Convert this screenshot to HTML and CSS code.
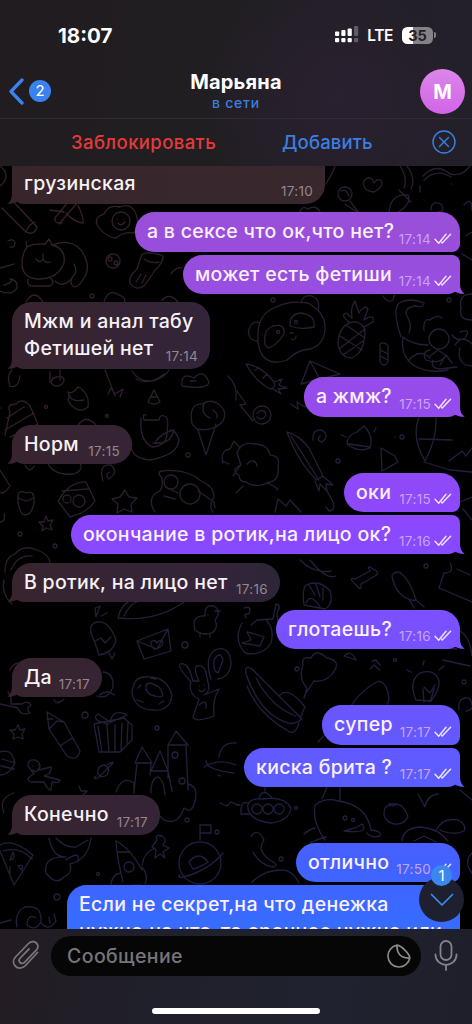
FILE: index.html
```html
<!DOCTYPE html>
<html lang="ru">
<head>
<meta charset="utf-8">
<title>Марьяна</title>
<link rel="stylesheet" href="styles.css">
</head>
<body>
<svg class="defs" width="0" height="0" aria-hidden="true">
  <symbol id="checks" viewBox="0 0 18 12"><path d="M1 6.3 4.7 10.2 12 1.2M8.2 9.9 16.6 1.2M8.2 9.9 7.6 9.3" fill="none" stroke="currentColor" stroke-width="1.4" stroke-linecap="round" stroke-linejoin="round"/></symbol>
  <symbol id="tail" viewBox="0 0 14 14"><path d="M2 0H9V4C9 8.500 10.500 11.500 13.700 13.700C9.500 14 6 13 3.500 11.200L0 8Z" fill="currentColor"/></symbol>
</svg>
<div class="phone">
  <header class="head">
    <div class="status">
      <span class="clock">18:07</span>
      <div class="indicators">
        <svg width="24" height="18" viewBox="0 0 24 18" fill="#fff"><rect x="0" y="5.500" width="4.200" height="4.500" rx="1"/><rect x="6.300" y="4" width="4.200" height="6" rx="1"/><rect x="12.600" y="2.500" width="4.200" height="7.500" rx="1"/><rect x="0" y="12" width="4.200" height="4.300" rx="1"/><rect x="6.300" y="12" width="4.200" height="4.300" rx="1"/><rect x="12.600" y="12" width="4.200" height="4.300" rx="1"/><g fill="#605c62"><rect x="19" y="0" width="4.200" height="10" rx="1"/><rect x="19" y="12" width="4.200" height="4.300" rx="1"/></g></svg>
        <span class="lte">LTE</span>
        <div class="battery"><span>35</span></div><i class="nub"></i>
      </div>
    </div>
    <div class="nav">
      <div class="back">
        <svg width="17" height="27" viewBox="0 0 17 27"><path d="M14 2 3 13.500 14 25" fill="none" stroke="#3b82ee" stroke-width="3.300" stroke-linecap="round" stroke-linejoin="round"/></svg>
        <span class="count">2</span>
      </div>
      <div class="who"><b class="name">Марьяна</b><span class="online">в сети</span></div>
      <div class="avatar">М</div>
    </div>
    <div class="actions">
      <span class="block">Заблокировать</span>
      <span class="add">Добавить</span>
      <svg class="close" width="24" height="24" viewBox="0 0 24 24" fill="none" stroke="#3b7fe0" stroke-width="1.400"><circle cx="12" cy="12" r="11"/><path d="M7.500 7.500 16.500 16.500M16.500 7.500 7.500 16.500" stroke-linecap="round"/></svg>
    </div>
  </header>

  <main class="chat">
    <svg class="doodles" viewBox="0 166 472 763" fill="none" stroke="url(#ink)" stroke-width="1.300" stroke-linecap="round" stroke-linejoin="round" aria-hidden="true">
      <defs><linearGradient id="ink" gradientUnits="userSpaceOnUse" x1="0" y1="200" x2="472" y2="620"><stop offset="0" stop-color="#352129"/><stop offset=".45" stop-color="#2a1d2f"/><stop offset="1" stop-color="#1f1f42"/></linearGradient></defs>
      <!-- pencils, egg, cats -->
      <path d="M0 166C8 172 8 180 0 186M2 208 26 232Q34 236 37 227L12 200M26 232Q28 225 35 222M55 218 68 202M59 224 78 202M55 218Q54 224 62 223M78 205Q84 218 83 223Q74 222 66 213"/>
      <path d="M97 225Q94 217 104 214Q108 204 120 207Q131 202 136 214Q140 224 134 233Q124 231 116 238Q106 238 97 225Z"/><circle cx="121" cy="221" r="9"/><path d="M117 219h.1M124 219h.1M118 223Q121 227 125 222"/>
      <path d="M27 247Q34 243 45 244L49 239 52 245Q66 248 64 263Q58 279 38 279Q22 278 22 263Q22 254 27 247L26 242M36 259Q40 264 43 259Q46 264 50 262M43 259V254M52 245Q70 238 81 250Q92 266 84 278Q76 291 72 285Q69 280 75 274Q77 270 74 264M28 279Q26 286 34 286H50Q56 282 50 278M55 281Q62 288 70 280"/>
      <path d="M8 241Q14 238 15 243Q15 248 10 247M0 268 14 264M0 291Q12 296 17 288Q18 280 10 279M4 285Q10 284 12 280"/>
      <circle cx="113" cy="261" r="7"/><circle cx="110" cy="259" r="2"/><circle cx="116" cy="263" r="2"/>
      <path d="M142 254Q150 251 163 256Q163 263 156 269L145 285Q136 292 130 283Q129 276 137 269ZM141 274 136 282M146 275 142 283M144 259Q151 264 159 262"/>
      <path d="M104 302Q108 288 119 295Q128 298 123 304M26 302Q34 288 43 302M171 274Q176 266 182 268M162 300Q170 292 178 302"/>
      <!-- sky bits beside the first rows -->
      <path d="M365 188C359 178 373 174 374 183C380 174 388 185 374 192Q366 191 365 188ZM326 184Q334 170 335 166M400 166Q408 178 404 188M407 166Q416 178 411 189M423 176Q436 162 450 174Q462 177 470 166M424 180Q436 168 451 177"/><circle cx="345" cy="194" r="7"/><path d="M350 201 359 213M341 191Q346 188 349 196M389 212Q391 193 408 195Q412 204 397 213M399 190 411 202M420 186v6M424 200h.1M451 184h.1"/><path d="M431 210Q431 200 441 204Q446 212 438 212M464 205Q472 196 472 210M466 236Q476 226 476 244M462 254 472 260"/>
      <path d="M300 212Q302 205 308 209Q316 204 320 212M345 204 360 214M50 210 64 212M440 242Q455 238 460 246"/>
      <!-- panda, carrot, pineapple -->
      <path d="M258 333Q259 313 276 307Q290 300 308 303Q326 313 325 329Q324 345 310 349Q297 350 287 360Q271 366 263 356Q257 348 258 333ZM257 341Q247 340 249 329Q252 320 260 323M301 303Q303 294 312 296Q321 300 318 310M265 345Q263 329 273 326Q285 323 284 334Q276 346 268 348ZM290 326Q289 314 301 313Q316 315 314 327Q300 330 290 326ZM290 333h3M291 339Q296 341 296 336"/><circle cx="278" cy="332" r="1.500"/><circle cx="296" cy="322" r="1.500"/>
      <path d="M246 364Q262 366 274 382Q276 388 270 389Q254 380 246 364ZM274 382 282 379 279 385 287 388 278 389 281 394 273 389M255 370 259 368M263 378 267 374"/>
      <path d="M338 342Q340 325 352 322Q364 321 365 333Q364 354 351 358Q339 357 338 342ZM340 336 362 350M346 325 365 338M339 349 365 329M343 355 363 341M349 322Q340 315 346 313L352 318Q350 308 355 301L359 313Q365 304 368 309L364 320Q375 313 373 322L364 327"/>
      <path d="M301 384 310 361 340 374ZM310 361Q315 370 320 380M380 344Q385 341 388 346V362Q384 368 380 362ZM380 350 388 354M380 356 388 360M383 296Q388 304 393 300L396 290"/>
      <path d="M401 337Q392 310 399 303Q410 297 424 303Q424 308 415 306Q402 308 408 318Q412 325 409 333M403 337Q400 355 413 365Q428 374 448 370M403 337Q413 345 428 345M424 330Q423 318 430 320Q437 314 442 318M409 360Q420 348 430 358M430 350Q421 352 426 360Q438 364 444 358M433 360Q430 368 440 369L457 367M460 332Q472 328 465 338Q458 342 452 335M455 345Q462 334 472 344M460 348Q456 365 472 366"/><circle cx="439" cy="339" r="10"/><path d="M430 356 438 350 448 357M440 365 446 355 452 363M472 294Q458 294 461 308Q458 320 472 320"/>
      <!-- left column beneath the long reply -->
      <path d="M12 370Q6 376 10 386Q18 389 20 376M50 372V383M60 370V380M57 377C65 374 67 384 58 386C49 386 50 378 57 377M105 370 115 396M108 394 111 388 115 394 123 389 120 397M132 371Q140 384 156 380Q166 376 169 370M136 379Q150 386 164 374M182 386Q181 371 194 378Q203 368 209 382Q208 390 182 386ZM190 381h6M84 400Q70 403 68 392Q72 395 78 387Q90 393 88 407Q80 414 71 405Q66 400 70 396M148 402 154 390 160 402Q153 406 148 402M150 397h8M228 376Q238 385 236 400"/>
      <path d="M5 435 10 412Q6 404 16 404Q22 397 30 406L38 424M7 418 24 407M5 430 34 413M10 437 38 424M78 425Q86 414 96 425M1 408h.1"/>
      <path d="M141 418Q139 440 152 447Q168 446 167 431Q169 421 166 417Q160 413 159 420H144Q142 413 146 415M155 443Q160 433 174 430Q171 445 153 443M131 442Q129 458 150 460Q178 455 179 440Q176 430 170 430"/>
      <path d="M192 424Q188 403 203 404Q208 399 217 403Q228 410 223 421Q214 432 197 429ZM198 430 206 455 216 424M204 404Q200 413 210 418M213 410l4 4v4"/>
      <path d="M47 461Q52 476 74 474Q84 470 80 463M25 465Q30 474 34 466M103 481Q98 464 111 465Q119 472 109 479Q104 474 110 472M0 470 10 486Q4 495 0 492M58 501Q70 481 86 482L95 501Q88 512 70 517ZM62 491 88 489M18 497Q18 489 26 493Q35 489 34 503Q31 518 22 514Q17 505 18 497ZM18 498 26 501 34 498M0 522Q6 522 4 514"/><circle cx="67" cy="499" r="4"/><circle cx="79" cy="501" r="6"/>
      <path d="m125 490 4 7 8 1-6 6 1 8-8-3-7 4 1-9-6-5 8-2zM46 516l2 5 5-1-3 5 2 5-6-2-4 3 1-5-4-4h5z"/>
      <path d="M155 512Q147 500 156 493Q164 491 162 478Q156 472 162 471Q186 468 201 481Q214 486 214 497Q208 506 213 512M164 496 175 499M178 493 165 487M198 491 214 502 215 508"/><circle cx="171" cy="482" r="7"/><circle cx="190" cy="494" r="10"/>
      <path d="M223 463Q220 450 230 449L234 441 240 448M222 461 229 464M233 476 240 466"/>
      <!-- curls, umbrella, sheep, bell -->
      <circle cx="262" cy="415" r="9"/><path d="M257 413Q264 407 266 415Q262 422 257 417M237 391 246 404 240 405 253 421M291 404 298 409 297 402 305 407 311 405M313 440Q312 429 322 430Q330 436 322 442Q316 440 320 436M287 432Q299 435 309 448L323 476 317 480Q299 464 287 432ZM291 436 319 480M323 476 333 485 326 484 327 491 320 484 319 491 315 481M326 489 333 502Q336 510 329 511L326 507"/>
      <path d="M237 453Q241 441 254 444Q268 444 270 455Q281 456 278 466Q280 480 270 482Q255 489 246 482Q239 482 239 475Q230 470 241 465ZM247 464Q255 457 257 466M243 486 236 493M267 482 278 489M347 444Q347 435 357 432L364 426Q374 436 370 448Q358 453 347 444ZM349 444 370 447M346 437 341 435M374 432 376 428M381 448 382 471 398 462 395 456ZM419 417Q411 438 425 461Q437 439 436 418M419 439 452 440M424 462 450 470 472 472M449 461 462 451 466 456 472 448"/>
      <path d="M275 512 278 499 286 506 290 500 301 512M460 502 472 497M463 509 472 520M277 490h.1M395 437h.1"/>
      <!-- dinosaur, lolly, letter, donut -->
      <path d="M5 572Q5 557 15 554Q23 544 37 550Q49 554 50 563M11 570Q17 555 32 556M4 580Q1 594 12 604 14 619Q17 631 8 641M20 600Q24 615 18 633Q2 646 5 652Q20 655 34 641M38 602Q36 616 51 631Q61 640 63 622Q59 608 49 602M24 642Q43 638 51 652M44 623Q36 643 35 649Q43 655 51 652M63 625 73 623Q80 629 75 632Q62 636 54 636"/>
      <path d="M94 640Q86 625 97 622Q109 620 116 640Q113 653 99 655ZM95 641 101 638 105 643 111 637M108 651 112 659 115 653M96 617 95 608 100 606ZM101 616 107 613M118 618Q122 600 138 599M118 618Q156 622 184 602M124 616Q132 600 143 601"/>
      <path d="M137 641 168 629 171 651 144 659ZM137 641 157 649 168 629M154 649C146 639 156 639 157 643C163 635 167 648 154 649Z"/>
      <path d="M132 693Q133 677 145 677Q166 675 172 695Q170 712 152 710Q135 709 132 693ZM146 686Q147 680 159 687Q168 700 155 696Q145 694 146 686ZM138 688l3-3M137 700l6 2M159 704l5-3M151 678l5 1"/>
      <path d="M195 630Q191 615 205 616Q204 604 214 606Q222 611 215 620Q219 628 212 633Q202 636 195 630ZM208 615h.1M215 611 220 611M200 632v5M210 633v4"/><path d="M191 682Q177 667 180 664Q188 661 193 681M193 681H199M199 681Q193 668 197 666Q204 664 206 673L208 682Q211 692 204 695L219 689Q212 700 214 716Q196 723 193 717L199 699Q188 694 191 682M199 686h.1M204 685h.1M199 690Q202 694 205 689M199 705Q207 698 206 708M211 679Q204 658 215 650Q229 644 231 663Q230 677 218 679M214 660Q220 650 223 660L218 673Q213 672 214 660Z"/>
      <path d="M8 692Q12 697 11 704H22Q28 700 31 705Q25 709 30 713Q20 716 18 708L0 704M99 695Q108 689 114 695M103 672Q114 673 113 687Q108 700 97 696M54 700Q57 706 64 699M10 670Q13 664 18 663"/>
      <!-- fish bowl, ship, moon, bone -->
      <path d="M242 623Q233 640 245 653Q262 657 271 643Q275 629 266 620M247 632 251 640 242 643 260 646 264 637 255 634ZM244 608Q252 605 249 614Q243 613 246 618M251 625 257 620 273 619 276 604Q282 605 277 613L278 622M304 605Q302 590 306 585Q320 579 330 591Q334 604 325 609ZM309 585 315 595M316 584 320 597M323 588 323 600M306 603Q311 592 320 607M356 585Q347 577 355 579L370 571Q366 564 373 569Q381 572 375 576L361 584Q362 592 356 585M300 560Q314 574 331 571M310 560Q326 580 336 576M393 574Q390 575 397 590Q407 602 416 600Q411 582 402 574Q398 570 393 574ZM409 599 414 608M416 600 424 607M444 573 439 588 472 602M450 563Q455 573 444 573M457 569 470 575"/>
      <path d="M246 674Q244 664 252 669L302 719Q294 725 288 723Q260 714 246 674ZM256 678Q272 708 296 716M247 686Q257 713 288 731Q295 736 299 723M279 696Q288 685 305 707L300 718M304 698 307 688Q298 678 303 665Q301 656 311 658Q316 648 327 658Q340 660 335 670Q327 683 314 681L306 693M347 712Q360 690 379 681Q388 684 389 699L386 710M344 656Q351 649 356 660ZM372 661 376 660 380 665M370 669l4-4 6 5"/>
      <path d="M416 700Q408 681 420 673Q435 668 439 681Q440 689 431 701ZM423 689 424 702M434 689 430 702M424 687 430 693 435 685M411 672 407 670M423 665 424 661M439 670 444 666M459 710Q457 697 469 698Q477 710 466 711M456 629Q470 634 472 656M438 647 457 649M318 742Q334 725 341 722M443 660 470 666"/>
      <!-- gift, crayon, castle and planets -->
      <path d="M94 724 124 718 132 725 132 740 120 752 99 752ZM98 726 102 752M107 725 109 752M115 725 115 752M122 723 121 750M128 723 127 743M108 724Q90 720 98 714L110 722Q113 708 127 715L109 723M47 712 49 729 67 756Q77 762 80 751L64 722ZM49 729 57 721 64 722M60 746 72 738M47 719 53 719M18 725l2 5 5-1-3 5 1 5-5-2-5 2 1-5-4-4h5zM0 752Q10 749 13 757L15 763Q9 775 0 775M2 759 15 763M1 766 14 769"/>
      <path d="M142 747 135 763H152ZM137 763 134 791M151 763 150 775M160 751 151 771H168ZM168 771 172 791M176 731 168 745H188ZM168 745V778M186 745 188 790M151 793Q151 778 158 777Q164 780 165 795M116 792Q122 775 134 783V793M188 784Q200 787 194 804Q191 814 184 808Q178 826 164 820L160 816"/><circle cx="175" cy="755" r="3"/><circle cx="182" cy="781" r="3"/>
      <path d="M28 766Q28 759 35 760Q42 762 39 770L51 767Q52 774 44 776L60 780Q60 784 52 782L51 790Q47 789 44 782L31 782Q24 779 34 774ZM33 766h.1M38 765h.1M33 770Q36 774 39 768M98 773Q97 765 105 765Q111 769 107 775Q100 779 98 773ZM96 776Q92 780 98 778L112 764Q115 760 107 765M79 786l2 5 6 0-4 4 1 5M204 767Q218 758 236 765M206 761Q207 770 234 773M219 757Q221 742 236 743M221 776 218 775M220 803 227 806 231 802 238 805"/>
      <path d="M4 813Q-2 798 14 793M0 845Q13 838 33 855L14 885 0 851M3 851Q20 846 32 859M13 852Q16 859 10 860ZM18 866Q24 863 22 870ZM10 867v6M49 838Q53 858 66 857Q43 856 46 873Q56 886 64 877Q73 873 70 864Q88 860 91 838M56 838Q65 848 76 847L88 840M66 860Q80 850 78 861"/>
      <path d="M116 841Q117 858 123 882M116 841Q130 848 142 870M117 852H129M111 887Q111 874 121 873M142 867Q149 875 145 884M124 886 140 885M142 865Q144 852 155 848"/><circle cx="129" cy="867" r="5"/><path d="M157 840Q154 834 162 836Q168 839 163 845L169 848 163 852 165 858 160 854 155 858 156 850 152 847Z"/><circle cx="200" cy="863" r="21"/><path d="M200 840V825H211V833H201M189 862Q199 850 208 862Q199 868 193 869ZM180 875Q176 878 184 877Q209 870 223 853M17 927Q14 912 25 907Q42 904 41 922Q35 932 27 925Q28 913 36 918M0 923 11 920M41 923Q49 932 56 921L54 914M49 917 50 923"/>
      <!-- submarine and sea life -->
      <path d="M248 809Q246 798 262 799Q285 796 291 808Q289 821 271 823Q251 821 248 809ZM248 803Q240 800 241 814H250M259 798Q263 787 272 798M265 791V788M236 805h4"/><circle cx="257" cy="809" r="5"/><circle cx="268" cy="809" r="5"/><circle cx="279" cy="809" r="5"/>
      <path d="M315 805Q312 822 325 840M315 805Q326 797 338 801Q367 805 371 830Q382 831 380 836Q370 838 367 833M344 831Q357 828 362 824Q370 834 344 831ZM322 799 327 787M340 801V786M304 834Q310 829 315 828M310 843Q323 837 326 837M384 815Q384 803 393 806Q401 800 408 816Q405 825 394 824Q386 822 384 815ZM389 804H397M418 794 425 807Q427 795 438 794M402 841Q403 828 420 827Q438 828 448 841M436 831Q442 817 458 820Q467 825 464 831Q454 836 440 830M414 841 424 836 436 842M251 836Q258 827 264 840Q256 850 270 860Q280 865 273 867Q260 865 253 852M252 882Q265 870 280 870Q292 869 299 883M472 853Q463 862 472 873M460 790 472 800"/><circle cx="345" cy="818" r="2"/><circle cx="353" cy="820" r="1.500"/>
      <g fill="none"><circle cx="273" cy="300" r="2"/><circle cx="449" cy="300" r="2"/><circle cx="46" cy="407" r="1.500"/><circle cx="107" cy="416" r="1.500"/><circle cx="338" cy="461" r="2"/><circle cx="20" cy="534" r="2"/><circle cx="55" cy="546" r="2"/><circle cx="188" cy="455" r="2"/><circle cx="402" cy="437" r="2"/><circle cx="85" cy="715" r="3"/><circle cx="185" cy="645" r="3"/><circle cx="157" cy="728" r="2"/><circle cx="297" cy="669" r="2"/><circle cx="395" cy="660" r="1.500"/><circle cx="464" cy="682" r="2"/><circle cx="57" cy="897" r="3"/><circle cx="98" cy="874" r="1.500"/><circle cx="187" cy="820" r="2"/><circle cx="217" cy="832" r="2"/><circle cx="296" cy="808" r="1.500"/><circle cx="281" cy="859" r="2"/><circle cx="92" cy="296" r="2"/><circle cx="426" cy="566" r="2"/></g>
    </svg>

    <div class="thread">
      <div class="msg in tall first"><p class="t"><br>грузинская</p><span class="meta">17:10</span><svg class="tail"><use href="#tail"/></svg></div>
      <div class="msg out top w325"><p class="t">а в сексе что ок,что нет?</p><span class="meta">17:14<svg class="ck"><use href="#checks"/></svg></span></div>
      <div class="msg out end w277"><p class="t">может есть фетиши</p><span class="meta">17:14<svg class="ck"><use href="#checks"/></svg></span><svg class="tail c1"><use href="#tail"/></svg></div>
      <div class="msg in tall w198"><p class="t">Мжм и анал табу<br>Фетишей нет</p><span class="meta">17:14</span><svg class="tail"><use href="#tail"/></svg></div>
      <div class="msg out w156"><p class="t">а жмж?</p><span class="meta">17:15<svg class="ck"><use href="#checks"/></svg></span><svg class="tail c2"><use href="#tail"/></svg></div>
      <div class="msg in w120"><p class="t">Норм</p><span class="meta">17:15</span><svg class="tail"><use href="#tail"/></svg></div>
      <div class="msg out top w116"><p class="t">оки</p><span class="meta">17:15<svg class="ck"><use href="#checks"/></svg></span></div>
      <div class="msg out end w389"><p class="t">окончание в ротик,на лицо ок?</p><span class="meta">17:16<svg class="ck"><use href="#checks"/></svg></span><svg class="tail c3"><use href="#tail"/></svg></div>
      <div class="msg in w268"><p class="t">В ротик, на лицо нет</p><span class="meta">17:16</span><svg class="tail"><use href="#tail"/></svg></div>
      <div class="msg out w184"><p class="t">глотаешь?</p><span class="meta">17:16<svg class="ck"><use href="#checks"/></svg></span><svg class="tail c4"><use href="#tail"/></svg></div>
      <div class="msg in w90"><p class="t">Да</p><span class="meta">17:17</span><svg class="tail"><use href="#tail"/></svg></div>
      <div class="msg out top w138"><p class="t">супер</p><span class="meta">17:17<svg class="ck"><use href="#checks"/></svg></span></div>
      <div class="msg out end w216"><p class="t">киска брита ?</p><span class="meta">17:17<svg class="ck"><use href="#checks"/></svg></span><svg class="tail c5"><use href="#tail"/></svg></div>
      <div class="msg in w148"><p class="t">Конечно</p><span class="meta">17:17</span><svg class="tail"><use href="#tail"/></svg></div>
      <div class="msg out top w164"><p class="t">отлично</p><span class="meta">17:50<svg class="ck"><use href="#checks"/></svg></span></div>
      <div class="msg out end tall w393"><p class="t">Если не секрет,на что денежка<br>нужно,на что-то срочное нужно или</p></div>
    </div>
    <div class="jump">
      <span class="unread">1</span>
      <svg width="24" height="14" viewBox="0 0 24 14"><path d="M1.500 1.500 12 12 22.500 1.500" fill="none" stroke="#3b8bee" stroke-width="1.700" stroke-linecap="round" stroke-linejoin="round"/></svg>
    </div>
  </main>

  <footer class="foot">
    <div class="compose">
      <svg width="28" height="30" viewBox="0 0 28 30"><path d="M25.500 12.500 13.500 25.500C10 29.200 5.500 28.700 3.300 26.200C.8 23.500 1 19.800 3.500 17L16.500 3.500C19 .9 22.300 1 24.300 3C26.300 5 26.300 8 24 10.500L12.500 22.300C11 23.800 9.200 23.700 8 22.500C6.800 21.300 6.900 19.500 8.300 18L17 9" fill="none" stroke="#77747b" stroke-width="1.800" stroke-linecap="round"/></svg>
      <div class="field"><span>Сообщение</span>
        <svg width="24" height="24" viewBox="0 0 24 24" fill="none" stroke="#8a888c" stroke-width="1.700" stroke-linejoin="round"><path d="M10 1.200A11 11 0 1 0 22.800 14C22.500 10 15 2 10 1.200ZM10 1.200C9.500 9 13.500 14.500 22.800 14"/></svg>
      </div>
      <svg width="24" height="31" viewBox="0 0 24 31" fill="none" stroke="#85838a" stroke-width="1.800" stroke-linecap="round"><rect x="6.500" y="1" width="11" height="19" rx="5.500"/><path d="M1.500 14.500V15A10.500 9.800 0 0 0 22.500 15V14.500M12 25V30"/></svg>
    </div>
    <div class="home"></div>
  </footer>
</div>
</body>
</html>
```
FILE: styles.css
```css
* { box-sizing: border-box; }
body { margin: 0; background: #000; font-family: Inter, "Liberation Sans", sans-serif; color: #fff; }
.defs { position: absolute; }
.phone { width: 472px; height: 1024px; display: flex; flex-direction: column; overflow: hidden; }

.head { height: 166px; background: radial-gradient(circle at 72% 60%, #2a2030 0, transparent 38%), linear-gradient(100deg, #201c1f 0, #211e22 45%, #23202a 100%); }
.status { height: 64px; padding: 24px 36px 0 58px; display: flex; justify-content: space-between; align-items: flex-start; }
.clock { font-size: 20.500px; font-weight: 700; line-height: 24px; }
.indicators { display: flex; align-items: center; height: 22px; }
.lte { font-size: 15.500px; font-weight: 600; letter-spacing: -.4px; margin-left: 8px; }
.battery { width: 31px; height: 17px; margin-left: 9px; border-radius: 5.500px; background: linear-gradient(90deg, #fff 37%, #858287 37%); color: #242126; font-size: 14.500px; font-weight: 700; line-height: 17px; text-align: center; }
.nub { width: 2px; height: 6px; margin-left: 1px; border-radius: 0 2px 2px 0; background: #858287; }

.nav { height: 55px; padding: 0 8px; display: grid; grid-template-columns: 60px 1fr 60px; align-items: center; border-bottom: 1px solid #302c33; }
.back { display: flex; align-items: center; gap: 4px; }
.count { width: 22px; height: 22px; border-radius: 50%; background: #3b82f0; font-size: 15px; line-height: 22px; text-align: center; }
.who { display: flex; flex-direction: column; align-items: center; }
.name { font-size: 20px; font-weight: 650; line-height: 24px; letter-spacing: .2px; }
.online { font-size: 14px; font-weight: 500; line-height: 18px; letter-spacing: .8px; color: #3b7fe0; }
.avatar { justify-self: end; width: 45px; height: 45px; margin-right: -1px; border-radius: 50%; background: linear-gradient(#dc86ea, #d264e8); font-size: 20px; font-weight: 700; line-height: 46px; text-align: center; }
.actions { height: 47px; padding: 0 16px 2px 71px; display: flex; align-items: center; font-size: 18.500px; font-weight: 500; }
.block { color: #e33b3b; width: 211px; letter-spacing: .4px; }
.add { color: #3b7fe0; letter-spacing: .15px; }
.close { margin-left: auto; }

.chat { height: 763px; position: relative; overflow: hidden; background: #000; }
.doodles { position: absolute; inset: 0; width: 472px; height: 763px; }
.thread { position: relative; display: flex; flex-direction: column; padding: 0 12px; margin-top: -29px; }
.msg { position: relative; flex: none; height: 39.300px; margin-bottom: 8.300px; padding: 6px 12px 0; border-radius: 19.600px; }
.msg.tall { height: 67px; }
.t { margin: 0; font-size: 19.500px; font-weight: 500; line-height: 26.800px; letter-spacing: .3px; white-space: nowrap; }
.meta { position: absolute; right: 12px; bottom: 4px; display: flex; align-items: center; gap: 3px; height: 18px; font-size: 13.500px; line-height: 18px; letter-spacing: .3px; white-space: nowrap; }
.ck { width: 18px; height: 12px; color: #f3e6ff; }
.in { align-self: flex-start; background: linear-gradient(90deg, #38242f 0, #33243a 200px, #2b2637 300px); color: #f6f1f5; border-bottom-left-radius: 12px; }
.in .meta { color: #95868f; }
.out { align-self: flex-end; border-bottom-right-radius: 12px; background: linear-gradient(#994fd6 200px, #964cea 390px, #8c48ff 520px, #7b50ff 620px, #6757ff 725px, #5b5dff 780px, #4361ff 860px, #386bff 920px) fixed; }
.out .t { color: #fbf0ff; font-weight: 550; }
.out .meta { color: #c9a3f5; right: 8px; }
.out.top { border-bottom-right-radius: 8px; margin-bottom: 3px; }
.out.end { border-top-right-radius: 8px; }
.first { width: 313px; background: linear-gradient(90deg, #37252a, #38282d); }
.tail { position: absolute; bottom: 0; right: -5px; width: 14px; height: 14px; }
.in .tail { right: auto; left: -5px; transform: scaleX(-1); color: #37242f; }
.c1 { color: #994fdd; } .c2 { color: #954bed; } .c3 { color: #8948ff; } .c4 { color: #7851ff; } .c5 { color: #5b5dff; }
.w325 { width: 325px; } .w277 { width: 277px; } .w198 { width: 198px; } .w156 { width: 156px; }
.w120 { width: 120px; } .w116 { width: 116px; } .w389 { width: 389px; } .w268 { width: 268px; }
.w184 { width: 184px; } .w90 { width: 90px; } .w138 { width: 138px; } .w216 { width: 216px; }
.w148 { width: 148px; } .w164 { width: 164px; } .w393 { width: 393px; }

.jump { position: absolute; right: 8px; bottom: 7px; width: 45px; height: 45px; border-radius: 50%; background: #1e2030; display: flex; align-items: center; justify-content: center; }
.jump svg { margin-top: 1px; }
.unread { position: absolute; top: -12px; left: 12px; width: 21px; height: 21px; border-radius: 50%; background: #3b87ee; font-size: 15px; line-height: 21px; text-align: center; }

.foot { height: 95px; background: linear-gradient(100deg, #231c22 0, #1f202b 35%, #20222f 70%, #1e1f2a 100%); }
.compose { height: 55px; padding: 7px 14px 0 12px; display: flex; align-items: flex-start; }
.compose > svg { margin-top: 4px; }
.field { flex: 1; height: 40px; margin: 0 13px 0 11px; padding: 0 10px 0 16px; border-radius: 20px; background: #060606; display: flex; align-items: center; justify-content: space-between; color: #78757a; font-size: 19.500px; font-weight: 500; letter-spacing: .4px; }
.home { width: 168px; height: 6px; margin: 24px auto 0; border-radius: 3px; background: #fff; }
```
